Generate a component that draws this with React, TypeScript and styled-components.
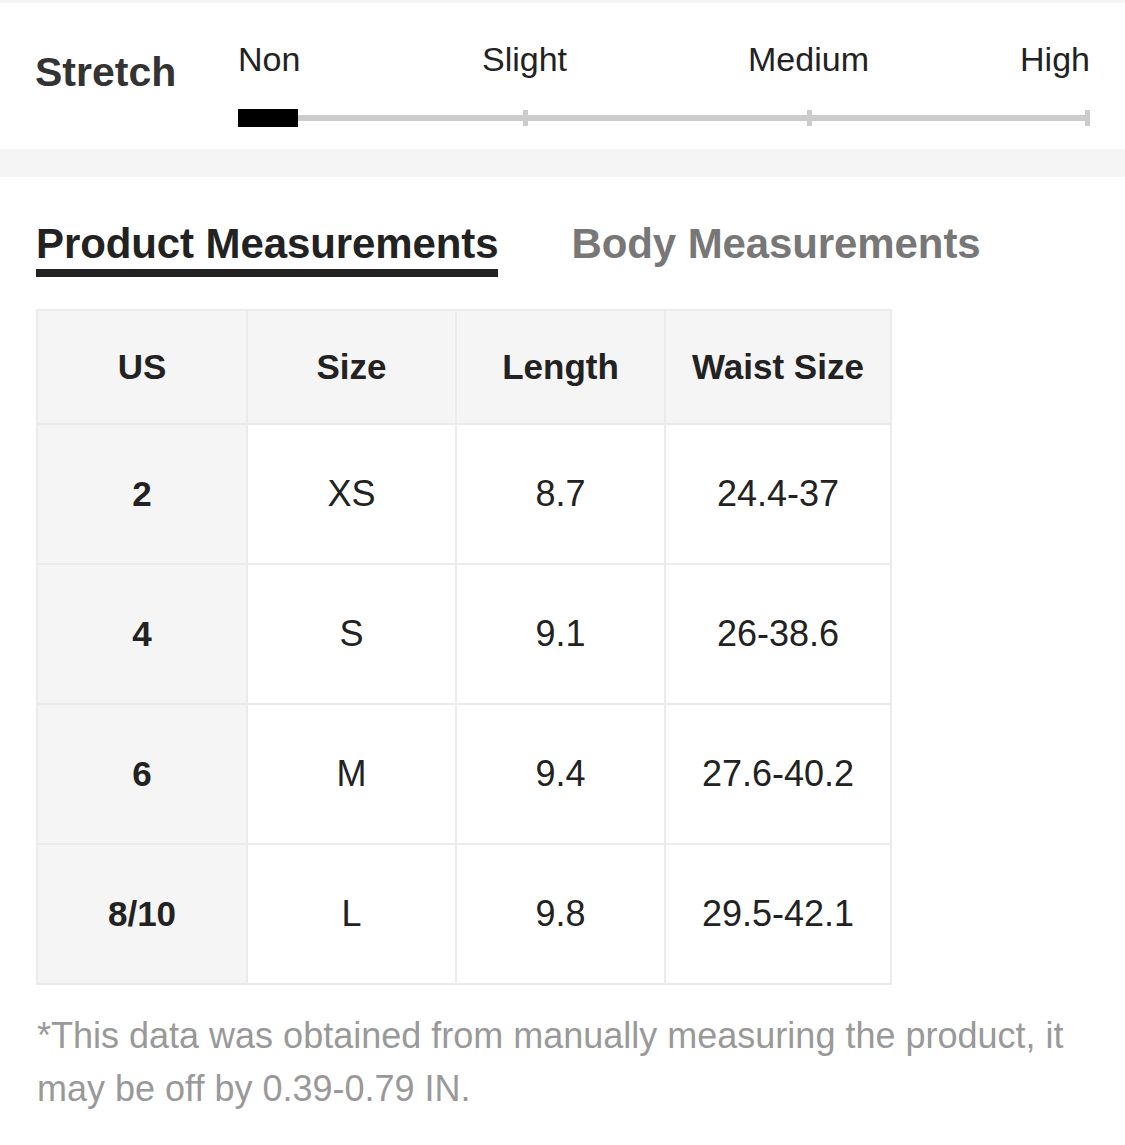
import React from "react";
import styled, { createGlobalStyle } from "styled-components";

const GlobalStyle = createGlobalStyle`
  html, body {
    margin: 0;
    padding: 0;
    background: #ffffff;
    font-family: "Liberation Sans", Arial, Helvetica, sans-serif;
    color: #222222;
  }
  * { box-sizing: border-box; }
`;

const Page = styled.div`
  width: 1125px;
  min-height: 1145px;
  background: #ffffff;
`;

const TopStrip = styled.div`
  height: 3px;
  background: #f5f5f5;
`;

const StretchSection = styled.section`
  display: flex;
  align-items: flex-start;
  padding: 36px 35px 22px 35px;
`;

const StretchLabel = styled.div`
  width: 203px;
  flex: none;
  margin-top: 9px;
  font-size: 41px;
  line-height: 48px;
  font-weight: 700;
  color: #333333;
`;

const Scale = styled.div`
  flex: 1;
  display: flex;
  flex-direction: column;
`;

const ScaleLabels = styled.div`
  display: grid;
  grid-template-columns: 143px 287px 281px 1fr;
  height: 40px;
`;

const ScaleLabel = styled.span<{ $align: "start" | "center" | "end" }>`
  justify-self: ${(p) => p.$align};
  font-size: 34px;
  line-height: 40px;
  color: #222222;
  white-space: nowrap;
`;

const Track = styled.div`
  display: flex;
  align-items: center;
  height: 18px;
  margin-top: 30px;
`;

const ActiveBar = styled.div`
  width: 60px;
  height: 18px;
  background: #000000;
  flex: none;
`;

const Segment = styled.div<{ $grow: number }>`
  flex: ${(p) => p.$grow} 1 0;
  height: 6px;
  background: #cccccc;
`;

const Tick = styled.div`
  width: 5px;
  height: 16px;
  background: #cccccc;
  flex: none;
`;

const Band = styled.div`
  height: 28px;
  background: #f5f5f5;
`;

const Content = styled.section`
  padding: 42px 35px 0 36px;
`;

const Tabs = styled.div`
  display: flex;
  gap: 73px;
`;

const Tab = styled.div<{ $active?: boolean }>`
  font-size: 42px;
  line-height: 50px;
  font-weight: 700;
  letter-spacing: -0.1px;
  color: ${(p) => (p.$active ? "#222222" : "#777777")};
  border-bottom: 8px solid ${(p) => (p.$active ? "#222222" : "transparent")};
  padding: 0;
  white-space: nowrap;
`;

const Table = styled.table`
  margin-top: 32px;
  border-collapse: collapse;
  table-layout: fixed;
  width: 854px;
`;

const HeadCell = styled.th`
  height: 114px;
  background: #f5f5f5;
  border: 2px solid #ebebeb;
  font-size: 35px;
  font-weight: 700;
  color: #222222;
  text-align: center;
  vertical-align: middle;
  padding: 0;
`;

const Cell = styled.td<{ $first?: boolean }>`
  height: 140px;
  background: ${(p) => (p.$first ? "#f5f5f5" : "#ffffff")};
  border: 2px solid #ebebeb;
  font-size: ${(p) => (p.$first ? "35px" : "36px")};
  font-weight: ${(p) => (p.$first ? 700 : 400)};
  color: #222222;
  text-align: center;
  vertical-align: middle;
  padding: 0;
`;

const Note = styled.p`
  margin: 24px 0 0 1px;
  font-size: 36px;
  line-height: 53px;
  color: #999999;
`;

const columns = [
  { title: "US", width: 210 },
  { title: "Size", width: 209 },
  { title: "Length", width: 209 },
  { title: "Waist Size", width: 226 },
];

const rows = [
  ["2", "XS", "8.7", "24.4-37"],
  ["4", "S", "9.1", "26-38.6"],
  ["6", "M", "9.4", "27.6-40.2"],
  ["8/10", "L", "9.8", "29.5-42.1"],
];

export default function App() {
  return (
    <Page>
      <GlobalStyle />
      <TopStrip />
      <StretchSection>
        <StretchLabel>Stretch</StretchLabel>
        <Scale>
          <ScaleLabels>
            <ScaleLabel $align="start">Non</ScaleLabel>
            <ScaleLabel $align="center">Slight</ScaleLabel>
            <ScaleLabel $align="center">Medium</ScaleLabel>
            <ScaleLabel $align="end">High</ScaleLabel>
          </ScaleLabels>
          <Track>
            <ActiveBar />
            <Segment $grow={225} />
            <Tick />
            <Segment $grow={279} />
            <Tick />
            <Segment $grow={273} />
            <Tick />
          </Track>
        </Scale>
      </StretchSection>
      <Band />
      <Content>
        <Tabs>
          <Tab $active>Product Measurements</Tab>
          <Tab>Body Measurements</Tab>
        </Tabs>
        <Table>
          <colgroup>
            {columns.map((c) => (
              <col key={c.title} style={{ width: c.width }} />
            ))}
          </colgroup>
          <thead>
            <tr>
              {columns.map((c) => (
                <HeadCell key={c.title}>{c.title}</HeadCell>
              ))}
            </tr>
          </thead>
          <tbody>
            {rows.map((r) => (
              <tr key={r[0]}>
                {r.map((v, i) => (
                  <Cell key={i} $first={i === 0}>
                    {v}
                  </Cell>
                ))}
              </tr>
            ))}
          </tbody>
        </Table>
        <Note>
          *This data was obtained from manually measuring the product, it may be off by 0.39-0.79 IN.
        </Note>
      </Content>
    </Page>
  );
}
